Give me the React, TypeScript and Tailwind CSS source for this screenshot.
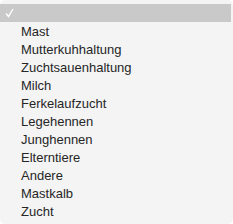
import React from "react";

const items = [
  "Mast",
  "Mutterkuhhaltung",
  "Zuchtsauenhaltung",
  "Milch",
  "Ferkelaufzucht",
  "Legehennen",
  "Junghennen",
  "Elterntiere",
  "Andere",
  "Mastkalb",
  "Zucht",
];

export default function App() {
  return (
    <div className="w-[233px] h-[224px] bg-white">
      <div
        className="w-[233px] h-[224px] bg-[#f4f4f4] rounded-[5px] py-[4px] text-[13px] text-[#262626]"
        style={{ fontFamily: '"Liberation Sans", Arial, sans-serif' }}
      >
        <div className="h-[18px] bg-[#c9c9c9] flex items-center pl-[5px] mr-[2px]">
          <svg width="9" height="10" viewBox="0 0 9 10">
            <path d="M1 5.5 L3.5 8.5 L8 1" fill="none" stroke="#ffffff" strokeWidth="1.4" />
          </svg>
        </div>
        {items.map((t) => (
          <div key={t} className="h-[18px] flex items-center pl-[21px] leading-none">
            {t}
          </div>
        ))}
      </div>
    </div>
  );
}
